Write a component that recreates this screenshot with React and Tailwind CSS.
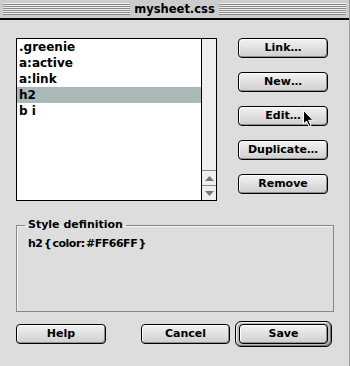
import React from 'react';

const font = { fontFamily: '"DejaVu Sans", Verdana, sans-serif' };

function MacButton({ label, className = '' }) {
  return (
    <div
      className={`h-[20px] flex items-center justify-center rounded-[4px] border border-black bg-gradient-to-b from-[#f2f2f2] to-[#cfcfcf] shadow-[inset_1px_1px_0_#ffffff,inset_-1px_-1px_0_#8f8f8f] text-[11px] font-bold text-black ${className}`}
    >
      {label}
    </div>
  );
}

function Cursor() {
  return (
    <svg className="absolute left-[303px] top-[110px]" width="12" height="18" viewBox="0 0 12 18">
      <path d="M0.5 0.5 L0.5 14 L3.5 11 L6 16.5 L8 15.5 L5.7 10.3 L10 10.3 Z" fill="#000" stroke="#fff" strokeWidth="1" />
    </svg>
  );
}

export default function App() {
  const rows = ['.greenie', 'a:active', 'a:link', 'h2', 'b i'];

  return (
    <div className="relative w-[350px] h-[366px] bg-[#dddddd] border-r border-[#999999] overflow-hidden" style={font}>
      {/* title bar */}
      <div className="h-[18px] bg-[#cccccc] flex items-center pl-[3px] pr-[3px]">
        <div className="flex-1 h-[12px] bg-[repeating-linear-gradient(to_bottom,#f0f0f0_0px,#f0f0f0_1px,#888888_1px,#888888_2px)]" />
        <div className="px-[4px] text-[11.5px] font-bold leading-[18px] text-black">mysheet.css</div>
        <div className="flex-1 h-[12px] bg-[repeating-linear-gradient(to_bottom,#f0f0f0_0px,#f0f0f0_1px,#888888_1px,#888888_2px)]" />
      </div>
      <div className="h-[2px] bg-black" />

      <div className="pl-[16px] pt-[18px]">
        <div className="flex">
          {/* list */}
          <div className="w-[201px] h-[163px] border border-black bg-white flex">
            <div className="flex-1">
              {rows.map((r) => (
                <div
                  key={r}
                  className={`h-[16px] pl-[2px] text-[12px] font-bold leading-[16px] text-black ${r === 'h2' ? 'bg-[#aab8b8]' : ''}`}
                >
                  {r}
                </div>
              ))}
            </div>
            <div className="w-[15px] border-l border-black bg-[#eeeeee] flex flex-col justify-end">
              <div className="h-[15px] border-t border-[#888888] flex items-center justify-center">
                <svg width="9" height="5" viewBox="0 0 9 5"><path d="M4.5 0 L9 5 L0 5 Z" fill="#777" /></svg>
              </div>
              <div className="h-[15px] border-t border-[#888888] flex items-center justify-center">
                <svg width="9" height="5" viewBox="0 0 9 5"><path d="M0 0 L9 0 L4.5 5 Z" fill="#777" /></svg>
              </div>
            </div>
          </div>

          {/* buttons column */}
          <div className="ml-[21px] w-[90px] flex flex-col gap-[14px]">
            <MacButton label="Link…" />
            <MacButton label="New…" />
            <MacButton label="Edit…" />
            <MacButton label="Duplicate…" />
            <MacButton label="Remove" />
          </div>
        </div>

        {/* style definition */}
        <fieldset className="mt-[17px] w-[318px] h-[94px] border border-[#888888] shadow-[inset_1px_1px_0_#f4f4f4] pl-[11px] pt-[4px]">
          <legend className="ml-[-3px] px-[3px] text-[11px] font-bold leading-[14px] text-black">Style definition</legend>
          <div className="text-[11px] font-bold text-black leading-[16px] tracking-[-0.5px] [word-spacing:-2px]">h2 {'{'} color: #FF66FF {'}'}</div>
        </fieldset>

        {/* bottom buttons */}
        <div className="mt-[9px] flex items-center">
          <MacButton label="Help" className="w-[90px]" />
          <MacButton label="Cancel" className="w-[89px] ml-[35px]" />
          <div className="ml-[5px] w-[97px] h-[26px] rounded-[6px] border border-black bg-[#bbbbbb] shadow-[inset_1px_1px_0_#eeeeee,inset_-1px_-1px_0_#777777] flex items-center justify-center">
            <MacButton label="Save" className="w-[89px]" />
          </div>
        </div>
      </div>

      <Cursor />
    </div>
  );
}
